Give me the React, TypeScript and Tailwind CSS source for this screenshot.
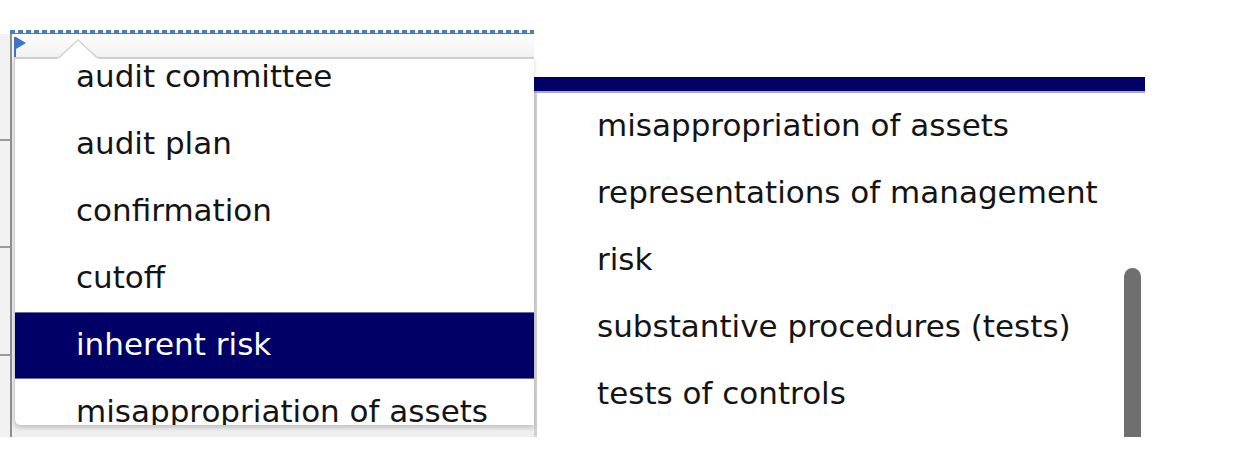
import React from "react";

const leftItems = [
  "audit committee",
  "audit plan",
  "confirmation",
  "cutoff",
  "inherent risk",
  "misappropriation of assets",
];

const rightItems = [
  "misappropriation of assets",
  "representations of management",
  "risk",
  "substantive procedures (tests)",
  "tests of controls",
];

export default function App() {
  return (
    <div
      className="flex h-[465px] w-[1259px] overflow-hidden bg-white text-[#141414]"
      style={{ fontFamily: '"DejaVu Sans", Verdana, sans-serif' }}
    >
      {/* Left: popup list */}
      <div className="flex w-[534px] shrink-0 flex-col pt-[30px]">
        <div className="ml-[10px] h-[3px] bg-[repeating-linear-gradient(90deg,#4a7cc4_0_5px,transparent_5px_8px)]" />
        <div className="ml-[10px] h-[1px] bg-[#4a7cc4]" />
        <div className="flex h-[403px]">
          {/* ruler strip */}
          <div className="flex w-[10px] flex-col bg-[#f2f2f2]">
            <div className="mt-[105px] h-[2px] bg-[#9a9a9a]" />
            <div className="mt-[105px] h-[2px] bg-[#9a9a9a]" />
            <div className="mt-[106px] h-[2px] bg-[#9a9a9a]" />
          </div>
          <div className="w-[2px] bg-[#8f8f8f]" />
          {/* main */}
          <div className="flex flex-1 flex-col bg-[#efefef]">
            <div className="flex h-[23px] bg-linear-to-b from-white to-[#f1f1f1]">
              <div className="ml-[2px] mt-[3px] flex h-[20px] w-[2px] bg-[#3f74c4]" />
              <svg width="10" height="12" viewBox="0 0 10 12" className="mt-[3px]">
                <path d="M0 0 L10 6 L0 12 Z" fill="#3f74c4" />
              </svg>
            </div>
            <div className="relative ml-[2px] h-[368px] rounded-bl-[6px] border-l border-t-2 border-[#cfcfcf] bg-white shadow-[0_3px_4px_rgba(0,0,0,0.18)]">
              <svg
                width="40"
                height="21"
                viewBox="0 0 40 21"
                className="absolute left-[43px] top-[-20px]"
              >
                <path d="M0 20 L20 1 L40 20 Z" fill="#ffffff" />
                <path d="M0 19.5 L20 1 L40 19.5" fill="none" stroke="#d2d2d2" strokeWidth="1.5" />
                <rect x="0" y="19" width="40" height="3" fill="#ffffff" />
              </svg>
              <div className="h-full overflow-hidden rounded-bl-[6px]">
                <div className="mt-[-15px] flex flex-col">
                  {leftItems.map((t) => (
                    <div
                      key={t}
                      className={
                        t === "inherent risk"
                          ? "flex h-[67px] items-center whitespace-nowrap border-y border-[#6a6aa8] bg-[#000066] pb-[3px] pl-[61px] text-[31px] text-white"
                          : "flex h-[67px] items-center whitespace-nowrap pb-[3px] pl-[61px] text-[31px]"
                      }
                    >
                      {t}
                    </div>
                  ))}
                </div>
              </div>
            </div>
            <div className="h-[12px]" />
          </div>
        </div>
      </div>

      {/* Right: list panel */}
      <div className="flex w-[611px] shrink-0 flex-col pt-[77px]">
        <div className="h-[14px] bg-[#000066]" />
        <div className="h-[2px] bg-[#a9a9d0]" />
        <div className="flex h-[344px] border-l-[3px] border-[#d2d2d2] bg-white">
          <div className="flex flex-1 flex-col">
            {rightItems.map((t) => (
              <div
                key={t}
                className="flex h-[67px] shrink-0 items-center whitespace-nowrap pb-[3px] pl-[60px] text-[31px]"
              >
                {t}
              </div>
            ))}
          </div>
          <div className="mr-[4px] flex w-[17px] flex-col justify-end">
            <div className="h-[169px] rounded-t-full bg-[#6f6f6f]" />
          </div>
        </div>
      </div>
    </div>
  );
}
